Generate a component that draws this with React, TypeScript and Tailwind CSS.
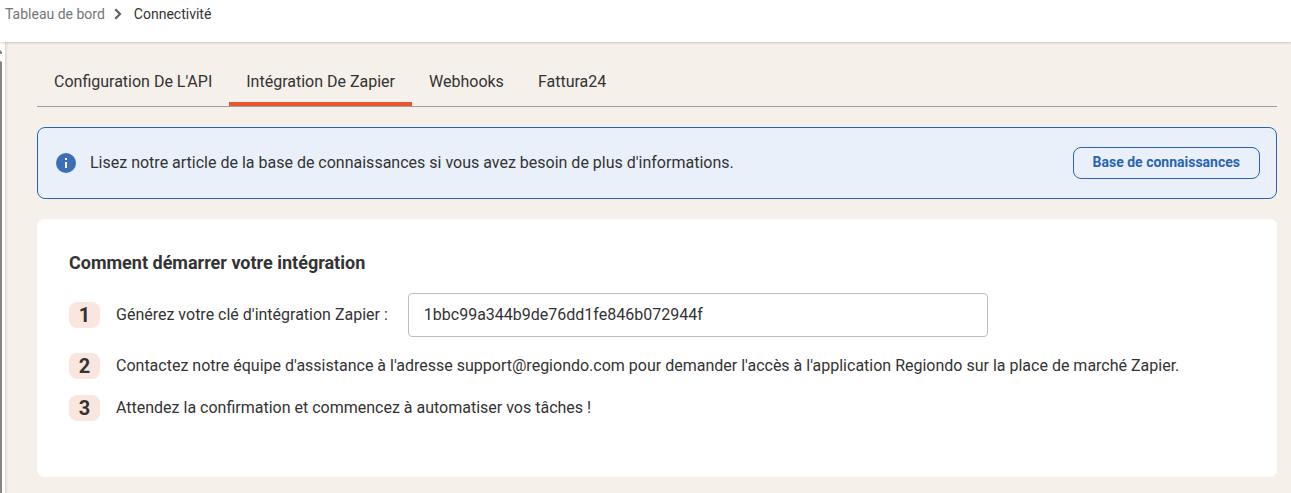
import { useState } from "react";

const tabs = [
  "Configuration De L'API",
  "Intégration De Zapier",
  "Webhooks",
  "Fattura24",
];

const Breadcrumb = () => (
  <header className="relative z-10 h-[42px] bg-white shadow-[0_1px_2px_rgba(0,0,0,0.18)]">
    <nav
      aria-label="Fil d'Ariane"
      className="flex h-7 items-center pl-[5px] text-sm"
    >
      <a href="#" className="text-[#757575]">
        Tableau de bord
      </a>
      <svg
        className="mr-3 ml-[9px] h-3 w-2"
        viewBox="0 0 8 12"
        fill="none"
        stroke="#616161"
        strokeWidth="2.2"
        aria-hidden="true"
      >
        <path d="M1.2 1.2 6 6 1.2 10.8" />
      </svg>
      <span className="text-[#333333]">Connectivité</span>
    </nav>
  </header>
);

// Edge of the side menu with its scrollbar
const MenuEdge = () => (
  <div className="z-[5] flex w-[5px] flex-col bg-white shadow-[1px_0_3px_rgba(0,0,0,0.14)]">
    <svg
      className="mt-2 h-[4px] w-[2px]"
      viewBox="0 0 2 4"
      fill="#858585"
      aria-hidden="true"
    >
      <path d="M0 0 2 2V4H0Z" />
    </svg>
    <div className="mt-[7px] w-[2px] flex-1 rounded-tr-full bg-[#858585]" />
  </div>
);

const InfoIcon = () => (
  <svg className="h-5 w-5" viewBox="0 0 20 20" aria-hidden="true">
    <circle cx="10" cy="10" r="10" fill="#3d6fb6" />
    <path d="M9 5h2v2H9zM9 9h2v6H9z" fill="#fff" />
  </svg>
);

const StepNumber = ({ value }: { value: number }) => (
  <span className="flex h-[26px] w-[31px] shrink-0 items-center justify-center rounded-lg bg-[#fbe6df] text-xl font-bold">
    {value}
  </span>
);

const App = () => {
  const [active, setActive] = useState(1);
  const [apiKey, setApiKey] = useState("1bbc99a344b9de76dd1fe846b072944f");

  return (
    <div className="flex min-h-screen flex-col bg-[#f5f0ea] font-['Roboto',sans-serif] text-base text-[#333333]">
      <Breadcrumb />
      <div className="flex flex-1">
        <MenuEdge />
        <main className="min-w-0 flex-1 pt-[14px] pr-[14px] pb-4 pl-8">
          <div role="tablist" className="flex border-b border-[#9e9e9e]">
            {tabs.map((tab, index) => (
              <button
                key={tab}
                type="button"
                role="tab"
                aria-selected={index === active}
                onClick={() => setActive(index)}
                className={
                  index === active
                    ? "h-[50px] border-b-4 border-[#e9552f] px-[17px] pt-1.5"
                    : "h-[50px] border-b-4 border-transparent px-[17px] pt-1.5"
                }
              >
                {tab}
              </button>
            ))}
          </div>

          <section className="mt-5 flex items-center rounded-lg border border-[#2a64ae] bg-[#e9f0fa] py-[19px] pr-4 pl-[18px]">
            <InfoIcon />
            <p className="ml-[14px] flex-1">
              Lisez notre article de la base de connaissances si vous avez
              besoin de plus d'informations.
            </p>
            <button
              type="button"
              className="h-8 rounded-lg border border-[#2a64ae] px-[19px] pb-0.5 text-sm font-bold text-[#2a64ae]"
            >
              Base de connaissances
            </button>
          </section>

          <section className="mt-5 rounded-lg bg-white px-8 pt-8 pb-14">
            <h2 className="text-lg leading-6 font-bold">
              Comment démarrer votre intégration
            </h2>
            <ol className="mt-[18px] flex flex-col gap-4">
              <li className="flex items-center">
                <StepNumber value={1} />
                <label htmlFor="zapier-key" className="ml-4">
                  Générez votre clé d'intégration Zapier :
                </label>
                <input
                  id="zapier-key"
                  type="text"
                  value={apiKey}
                  onChange={(e) => setApiKey(e.target.value)}
                  className="ml-5 h-11 w-[580px] rounded border border-[#bdbdbd] bg-white px-[15px] pb-0.5"
                />
              </li>
              <li className="flex items-center">
                <StepNumber value={2} />
                <p className="ml-4">
                  Contactez notre équipe d'assistance à l'adresse
                  support@regiondo.com pour demander l'accès à l'application
                  Regiondo sur la place de marché Zapier.
                </p>
              </li>
              <li className="flex items-center">
                <StepNumber value={3} />
                <p className="ml-4">
                  Attendez la confirmation et commencez à automatiser vos
                  tâches !
                </p>
              </li>
            </ol>
          </section>
        </main>
      </div>
    </div>
  );
};

export default App;
